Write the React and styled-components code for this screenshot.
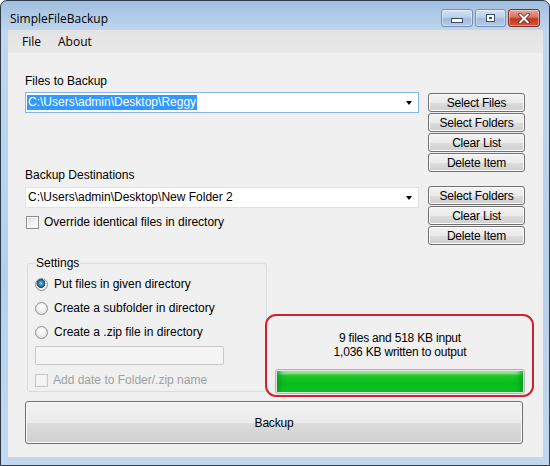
import React from 'react';
import styled, { createGlobalStyle } from 'styled-components';

const GlobalStyle = createGlobalStyle`
  html, body { margin: 0; padding: 0; background: #ffffff; }
  body { font-family: "Liberation Sans", Arial, sans-serif; }
  * { box-sizing: border-box; }
`;

const Window = styled.div`
  width: 550px;
  height: 466px;
  border: 1px solid #2d3a4a;
  border-radius: 7px 7px 0 0;
  background: linear-gradient(to bottom, #a2bfe0 0, #c0d6ee 30px, #b7d0ea 60%, #c2d8ef 100%);
  display: flex;
  flex-direction: column;
  padding: 0 6px 8px 7px;
`;

const TitleBar = styled.div`
  height: 29px;
  display: flex;
  align-items: flex-start;
  padding-top: 8px;
`;

const Title = styled.div`
  flex: 1;
  margin-left: 2px;
  margin-top: 1px;
  font-family: "Open Sans", "Noto Sans", sans-serif;
  font-size: 12px;
  line-height: 18px;
  color: #000;
`;

const CaptionButton = styled.div`
  width: ${p => p.$w}px;
  height: 18px;
  margin-left: 2px;
  border: 1px solid ${p => (p.$close ? '#8a2a20' : '#7590b3')};
  border-radius: 3px;
  display: flex;
  align-items: center;
  justify-content: center;
  background: ${p =>
    p.$close
      ? 'linear-gradient(to bottom, #e7a79b 0, #d6735f 45%, #c2381f 55%, #d25a3c 100%)'
      : 'linear-gradient(to bottom, #d3e2f3 0, #bcd0e8 45%, #a2bbdc 55%, #b3cbe8 100%)'};
  box-shadow: inset 0 0 0 1px rgba(255, 255, 255, 0.4);
  &:last-child { margin-right: 3px; }
`;

const MinGlyph = styled.div`
  width: 12px;
  height: 5px;
  margin-top: 5px;
  background: #fff;
  border: 1px solid #3b4f6b;
`;

const MaxGlyph = styled.div`
  width: 9px;
  height: 8px;
  background: #fff;
  border: 1px solid #3b4f6b;
  box-shadow: inset 0 0 0 2px #fff, inset 0 0 0 3px #3b4f6b;
`;

const Client = styled.div`
  flex: 1;
  background: #f0f0f0;
  display: flex;
  flex-direction: column;
`;

const MenuBar = styled.div`
  height: 23px;
  background: linear-gradient(to bottom, #e3e3e3, #e8e8e8);
  display: flex;
  align-items: center;
  padding-left: 14px;
  gap: 17px;
  font-family: "Open Sans", "Noto Sans", sans-serif;
  font-size: 12px;
  color: #000;
`;

const Content = styled.div`
  padding: 0 18px 0 17px;
  display: flex;
  flex-direction: column;
`;

const TopSection = styled.div`
  display: flex;
  gap: 9px;
`;

const LeftColumn = styled.div`
  width: 394px;
  display: flex;
  flex-direction: column;
`;

const Label = styled.div`
  font-size: 12px;
  line-height: 14px;
  margin-top: ${p => p.$mt}px;
  color: #000;
`;

const Combo = styled.div`
  height: 21px;
  margin-top: ${p => p.$mt}px;
  border: 1px solid ${p => (p.$focused ? '#86b6e6' : '#e2e2e2')};
  background: #fff;
  display: flex;
  align-items: center;
  padding: 0 5px 0 1px;
  font-size: 12px;
`;

const ComboText = styled.div`
  flex: 1;
  display: flex;
`;

const ComboValue = styled.span`
  line-height: 15px;
  padding: 0 1px;
  background: ${p => (p.$selected ? '#3399ff' : 'transparent')};
  color: ${p => (p.$selected ? '#fff' : '#000')};
`;

const Arrow = styled.div`
  width: 0;
  height: 0;
  border-left: 3.5px solid transparent;
  border-right: 3.5px solid transparent;
  border-top: 4px solid #000;
  margin-right: 1px;
`;

const CheckRow = styled.label`
  display: flex;
  align-items: center;
  gap: 5px;
  height: 14px;
  margin-top: ${p => p.$mt || 0}px;
  margin-left: ${p => p.$ml || 0}px;
  font-size: 12px;
  color: ${p => (p.$disabled ? '#a0a0a0' : '#000')};
`;

const CheckBox = styled.span`
  width: 13px;
  height: 13px;
  border: 1px solid ${p => (p.$disabled ? '#c9c9c9' : '#8f8f8f')};
  background: ${p =>
    p.$disabled
      ? '#f4f4f4'
      : 'linear-gradient(135deg, #dcdcdc 0, #f4f4f4 60%, #ffffff 100%)'};
  box-shadow: inset 0 0 0 1px ${p => (p.$disabled ? '#f0f0f0' : '#f7f7f7')};
`;

const ButtonColumn = styled.div`
  width: 97px;
  display: flex;
  flex-direction: column;
  padding-top: 40px;
`;

const ButtonGroup = styled.div`
  display: flex;
  flex-direction: column;
  gap: 1px;
  margin-top: ${p => p.$mt || 0}px;
`;

const WinButton = styled.button`
  height: ${p => p.$h || 19}px;
  width: ${p => (p.$wide ? '498px' : '100%')};
  margin-top: ${p => p.$mt || 0}px;
  padding: 0;
  border: 1px solid #707070;
  border-radius: 3px;
  background: linear-gradient(to bottom, #f2f2f2 0, #ebebeb 50%, #dddddd 51%, #cfcfcf 100%);
  box-shadow: inset 0 0 0 1px #fcfcfc;
  font-family: "Liberation Sans", Arial, sans-serif;
  font-size: 12px;
  color: #000;
  letter-spacing: -0.2px;
`;

const BottomRow = styled.div`
  display: flex;
  align-items: flex-start;
  margin-top: 11px;
`;

const GroupBox = styled.fieldset`
  flex: 0 0 240px;
  width: 240px;
  margin: 0 0 0 2px;
  padding: 0 0 4px 7px;
  border: 1px solid #d6dde3;
  border-radius: 3px;
  display: flex;
  flex-direction: column;
`;

const Legend = styled.legend`
  font-size: 12px;
  line-height: 14px;
  padding: 0 1px;
  color: #000;
`;

const RadioRow = styled.label`
  display: flex;
  align-items: center;
  gap: 6px;
  height: 16px;
  margin-top: ${p => p.$mt}px;
  font-size: 12px;
  color: #000;
`;

const Radio = styled.span`
  width: 13px;
  height: 13px;
  border-radius: 50%;
  border: 1px solid #8e8f8f;
  background: ${p =>
    p.$checked
      ? 'radial-gradient(circle at 45% 40%, #8fd2ee 0, #2f7eaf 28%, #17466f 48%, #e8e8e8 52%, #f6f6f6 100%)'
      : 'radial-gradient(circle at 50% 40%, #ffffff 0, #eeeeee 50%, #d6d6d6 100%)'};
`;

const TextField = styled.div`
  width: 189px;
  height: 19px;
  margin-top: 6px;
  border: 1px solid #c9c9c9;
  border-radius: 2px;
  background: #f4f4f4;
`;

const StatusPanel = styled.div`
  flex: 0 0 269px;
  width: 269px;
  height: 83px;
  margin: 58px 0 0 -2px;
  border: 2px solid #cc2331;
  border-radius: 11px;
  padding: 15px 7px 0 8px;
  display: flex;
  flex-direction: column;
  align-items: center;
  font-size: 12px;
  line-height: 14px;
  color: #000;
  letter-spacing: -0.2px;
`;

const Progress = styled.div`
  align-self: stretch;
  height: 25px;
  margin-top: 10px;
  border: 1px solid #b2b2b2;
  border-radius: 3px;
  background: #e6e6e6;
  padding: 1px;
`;

const ProgressFill = styled.div`
  height: 100%;
  border-radius: 1px;
  background: linear-gradient(to bottom, #c9f2c9 0, #7fe07f 12%, #1ec72a 22%, #06bd1c 60%, #0fc623 100%);
  box-shadow: inset 6px 0 6px -4px #0a8f17, inset -6px 0 6px -4px #0a8f17;
`;

export default function App() {
  return (
    <>
      <GlobalStyle />
      <Window>
        <TitleBar>
          <Title>SimpleFileBackup</Title>
          <CaptionButton $w={32}><MinGlyph /></CaptionButton>
          <CaptionButton $w={31}><MaxGlyph /></CaptionButton>
          <CaptionButton $w={32} $close>
            <svg width="12" height="11" viewBox="0 0 12 11">
              <path d="M2 1.5 L10 9.5 M10 1.5 L2 9.5" stroke="#5a1a12" strokeWidth="3.4" strokeLinecap="round" />
              <path d="M2 1.5 L10 9.5 M10 1.5 L2 9.5" stroke="#ffffff" strokeWidth="2" strokeLinecap="round" />
            </svg>
          </CaptionButton>
        </TitleBar>
        <Client>
          <MenuBar>
            <span>File</span>
            <span>About</span>
          </MenuBar>
          <Content>
            <TopSection>
              <LeftColumn>
                <Label $mt={21}>Files to Backup</Label>
                <Combo $mt={4} $focused>
                  <ComboText><ComboValue $selected>C:\Users\admin\Desktop\Reggy</ComboValue></ComboText>
                  <Arrow />
                </Combo>
                <Label $mt={55}>Backup Destinations</Label>
                <Combo $mt={5}>
                  <ComboText><ComboValue>C:\Users\admin\Desktop\New Folder 2</ComboValue></ComboText>
                  <Arrow />
                </Combo>
                <CheckRow $mt={7} $ml={1}>
                  <CheckBox />
                  Override identical files in directory
                </CheckRow>
              </LeftColumn>
              <ButtonColumn>
                <ButtonGroup>
                  <WinButton>Select Files</WinButton>
                  <WinButton>Select Folders</WinButton>
                  <WinButton>Clear List</WinButton>
                  <WinButton>Delete Item</WinButton>
                </ButtonGroup>
                <ButtonGroup $mt={14}>
                  <WinButton>Select Folders</WinButton>
                  <WinButton>Clear List</WinButton>
                  <WinButton>Delete Item</WinButton>
                </ButtonGroup>
              </ButtonColumn>
            </TopSection>
            <BottomRow>
              <GroupBox>
                <Legend>Settings</Legend>
                <RadioRow $mt={6}><Radio $checked />Put files in given directory</RadioRow>
                <RadioRow $mt={8}><Radio />Create a subfolder in directory</RadioRow>
                <RadioRow $mt={8}><Radio />Create a .zip file in directory</RadioRow>
                <TextField />
                <CheckRow $mt={8} $disabled>
                  <CheckBox $disabled />
                  Add date to Folder/.zip name
                </CheckRow>
              </GroupBox>
              <StatusPanel>
                <div>9 files and 518 KB input</div>
                <div>1,036 KB written to output</div>
                <Progress><ProgressFill /></Progress>
              </StatusPanel>
            </BottomRow>
            <WinButton $h={43} $wide $mt={4}>Backup</WinButton>
          </Content>
        </Client>
      </Window>
    </>
  );
}
